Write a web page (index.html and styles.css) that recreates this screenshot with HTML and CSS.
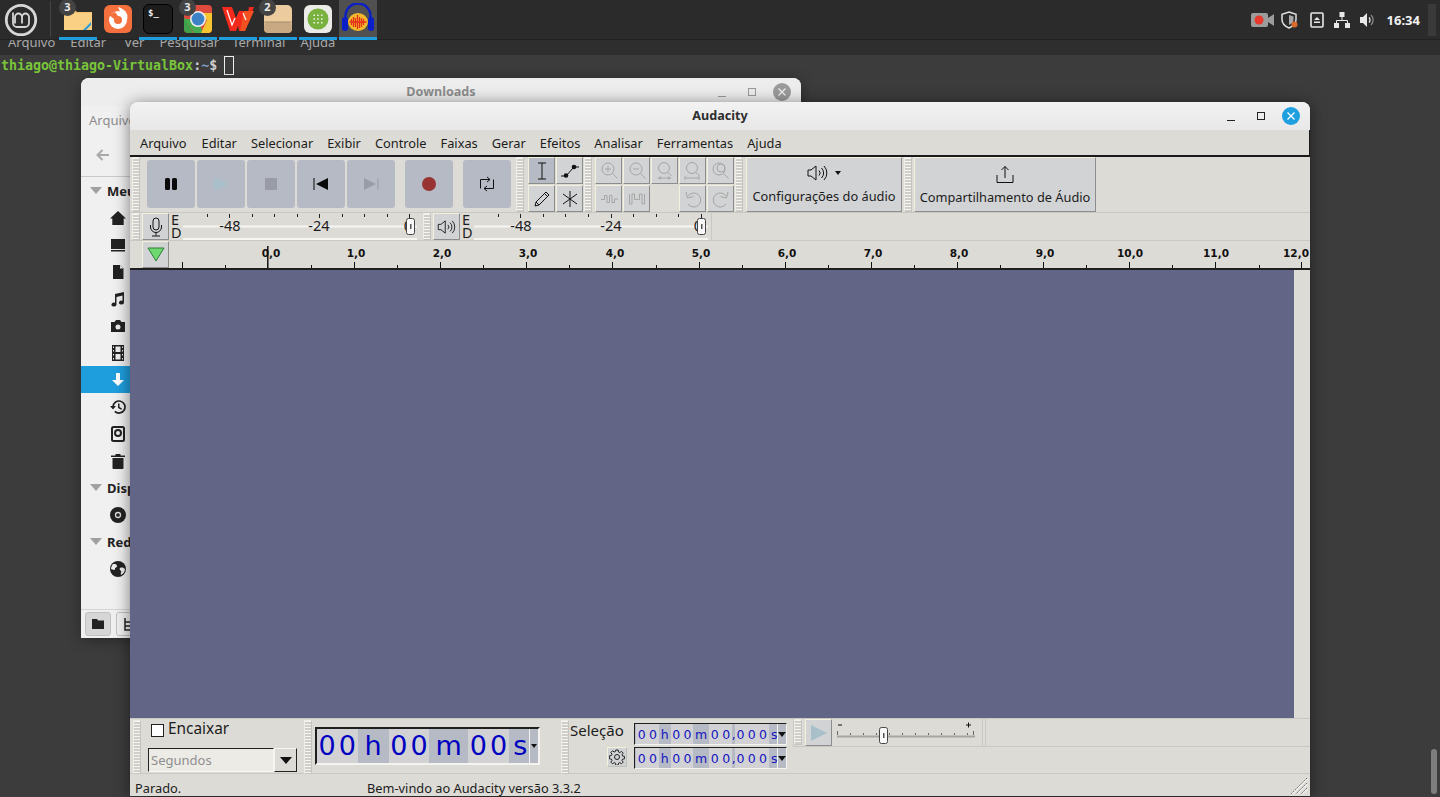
FILE: index.html
```html
<!DOCTYPE html>
<html lang="pt">
<head>
    <meta charset="UTF-8">
    <title>Audacity</title>
    <link rel="stylesheet" href="styles.css">
</head>
<body>
<div class="panel">
    <div class="menu-logo">
        <svg width="34" height="34" viewBox="0 0 34 34" fill="none" stroke="#d6d6d6">
            <circle cx="17" cy="17" r="14.7" stroke-width="2.8"/>
            <path d="M9 9.500v10.500a4 4 0 0 0 4 4h8a4 4 0 0 0 4-4v-6a3.500 3.500 0 0 0-7 0v6.500M18 14a3.500 3.500 0 0 0-7 0v6.500" stroke-width="1.800"/>
        </svg>
    </div>
    <div class="panel-sep"></div>
    <div class="dock">
        <div class="dock-item running">
            <svg width="30" height="26" viewBox="0 0 30 26">
                <path d="M1 3h10l3 3h15v18H1z" fill="#f6c46f"/>
                <path d="M1 7h28v17H1z" fill="#fad084"/>
                <path d="M20 24l8-8v3l-5 5z" fill="#2c9ad8"/>
            </svg>
            <span class="badge">3</span>
        </div>
        <div class="dock-item">
            <svg width="30" height="30" viewBox="0 0 30 30">
                <rect x="1" y="1" width="28" height="28" rx="6" fill="#f4703c"/>
                <circle cx="15" cy="16" r="9" fill="#fff"/>
                <path d="M15 3c4 1 7 3 9 7 .7 2 .5 4 0 6l-6-6z" fill="#fff"/>
                <path d="M6 11l6-3 3 4-4 3z" fill="#f4703c"/>
                <circle cx="15" cy="16" r="4" fill="#f4703c"/>
            </svg>
        </div>
        <div class="dock-item running">
            <div class="term-icon">$_</div>
        </div>
        <div class="dock-item running">
            <svg width="30" height="30" viewBox="0 0 30 30">
                <rect x="1" y="1" width="28" height="28" rx="4" fill="#de4b3e"/>
                <path d="M1 13L10 29H5a4 4 0 0 1-4-4z" fill="#3fa24a"/>
                <path d="M1 15l10 14h9l-5-14z" fill="#46ab50"/>
                <path d="M15 9h14v16a4 4 0 0 1-4 4h-7l6-13z" fill="#f7c52f"/>
                <circle cx="15" cy="15" r="8" fill="#eee"/>
                <circle cx="15" cy="15" r="6.400" fill="#3d82c6"/>
            </svg>
            <span class="badge badge-chrome">3</span>
        </div>
        <div class="dock-item running">
            <svg width="32" height="26" viewBox="0 0 32 26">
                <path d="M0 1h10l4 11 3-7h5l3 7 2-11h5L23 25h-6l-1-5-2 5H8z" fill="#f32a1c"/>
                <path d="M22 5h10l-9 20h-5z" fill="#f5501f"/>
                <path d="M5 4l5 15 3-7M21 7l3 7" fill="none" stroke="#fff" stroke-width="1.200"/>
            </svg>
        </div>
        <div class="dock-item running">
            <svg width="30" height="30" viewBox="0 0 30 30">
                <rect x="1" y="1" width="28" height="28" rx="5" fill="#eccb9e"/>
                <rect x="1" y="18" width="28" height="11" rx="4" fill="#c9a984"/>
                <path d="M1 18h28" stroke="#a98c6a"/>
            </svg>
            <span class="badge">2</span>
        </div>
        <div class="dock-item running">
            <svg width="30" height="30" viewBox="0 0 30 30">
                <rect x="1" y="1" width="28" height="28" rx="6" fill="#ebebe8"/>
                <circle cx="15" cy="15" r="10.500" fill="#79b13f"/>
                <path d="M10.500 10.500h1.500v1.500h-1.500zM14.200 10.500h1.500v1.500h-1.500zM18 10.500h1.500v1.500H18zM10.500 14.200h1.500v1.500h-1.500zM14.200 14.200h1.500v1.500h-1.500zM18 14.200h1.500v1.500H18zM10.500 18h1.500v1.500h-1.500zM14.200 18h1.500v1.500h-1.500zM18 18h1.500v1.500H18z" fill="#f4f7ee"/>
            </svg>
        </div>
        <div class="dock-item running active">
            <svg width="34" height="32" viewBox="0 0 34 32">
                <path d="M4.500 18v-5a12.500 12.500 0 0 1 25 0v5" fill="none" stroke="#0a1fc8" stroke-width="2.400"/>
                <rect x="1" y="14" width="6" height="14" rx="3" fill="#0a1fc8"/>
                <rect x="27" y="14" width="6" height="14" rx="3" fill="#0a1fc8"/>
                <ellipse cx="17" cy="19" rx="10" ry="9" fill="#f4b82a"/>
                <path d="M8.500 19h17M10.500 16v6M12.500 14v10M14.500 15v9M16.500 12v14M18.500 14v11M20.500 15v9M22.500 16v6" fill="none" stroke="#e2301c" stroke-width="1.300"/>
            </svg>
        </div>
    </div>
    <div class="tray">
        <svg class="t-cam" width="24" height="16" viewBox="0 0 24 16">
            <rect x="0" y="1" width="17" height="14" rx="2" fill="#9c9c9c"/>
            <path d="M17 6l6-4v12l-6-4z" fill="#9c9c9c"/>
            <circle cx="8" cy="8" r="4.500" fill="#e8392c"/>
        </svg>
        <svg class="t-shield" width="18" height="18" viewBox="0 0 18 18">
            <path d="M8 1l7 2.200v5.300c0 4-3 6.800-7 8.500-4-1.700-7-4.500-7-8.500V3.200z" fill="none" stroke="#e0e0e0" stroke-width="1.500"/>
            <path d="M8 4l4.500 1.500V9c0 2-2 4-4.500 5z" fill="#a8a8a8"/>
            <circle cx="13.500" cy="13.500" r="3" fill="#d96b2e"/>
        </svg>
        <svg class="t-box" width="14" height="16" viewBox="0 0 14 16">
            <rect x="1" y="1" width="12" height="14" rx="1" fill="none" stroke="#e8e8e8" stroke-width="1.600"/>
            <path d="M7 5l3 3H4zM4 9.500h6V11H4z" fill="#e8e8e8"/>
        </svg>
        <svg class="t-net" width="16" height="16" viewBox="0 0 16 16">
            <path d="M5.500 0h5v5h-5zM0 11h5v5H0zM11 11h5v5h-5z" fill="#e8e8e8"/>
            <path d="M8 5v3M2.500 11V8.500h11V11" fill="none" stroke="#e8e8e8"/>
        </svg>
        <svg class="t-vol" width="16" height="16" viewBox="0 0 16 16">
            <path d="M0 5h3l4-4v14l-4-4H0z" fill="#e8e8e8"/>
            <path d="M9 5.500a3.500 3.500 0 0 1 0 5" fill="none" stroke="#e8e8e8" stroke-width="1.300"/>
            <path d="M11 3a7 7 0 0 1 0 10" fill="none" stroke="#8c8c8c" stroke-width="1.300"/>
        </svg>
        <span class="clock">16:34</span>
        <div class="tray-end"></div>
    </div>
</div>

<div class="terminal">
    <div class="term-menu">
        <span>Arquivo</span><span>Editar</span><span class="tm-ver">Ver</span><span>Pesquisar</span><span class="tm-term">Terminal</span><span>Ajuda</span>
    </div>
    <div class="term-body">
        <span class="p-user">thiago@thiago-VirtualBox</span><span class="p-colon">:</span><span class="p-path">~</span><span class="p-colon">$ </span><span class="cursor"></span>
    </div>
    <div class="scroll-thumb"></div>
</div>

<div class="win files">
    <div class="files-title">
        <span>Downloads</span>
        <div class="files-ctrl">
            <i class="ctl-min grey"></i><i class="ctl-max grey"></i>
            <svg class="ctl-close" width="18" height="18" viewBox="0 0 18 18"><circle cx="9" cy="9" r="9" fill="#9b9b9b"/><path d="M5.500 5.500l7 7M12.500 5.500l-7 7" stroke="#eee" stroke-width="1.300"/></svg>
        </div>
    </div>
    <div class="files-menu">Arquivo</div>
    <div class="files-tool">
        <svg width="14" height="12" viewBox="0 0 14 12"><path d="M13 6H2M6.500 1L1.500 6l5 5" fill="none" stroke="#a9a9a9" stroke-width="2"/></svg>
    </div>
    <div class="side">
        <div class="side-head"><i class="tri"></i>Meu computador</div>
        <div class="side-row"><svg width="16" height="16" viewBox="0 0 16 16"><path d="M8 1L0 8.500h2.300V15h11.400V8.500H16z" fill="#222"/></svg></div>
        <div class="side-row"><svg width="16" height="16" viewBox="0 0 16 16"><path d="M1 2h14v10H1zM1 13h14v1.500H1z" fill="#222"/></svg></div>
        <div class="side-row"><svg width="16" height="16" viewBox="0 0 16 16"><path d="M3 1h7l3.500 3.500V15H3z" fill="#222"/><path d="M10 1v3.500h3.500" fill="#eee"/></svg></div>
        <div class="side-row"><svg width="16" height="16" viewBox="0 0 16 16"><path d="M5 3l9-2v10.500a2.500 2 0 1 1-1.500-1.800V4.500L6.500 6v7.500A2.500 2 0 1 1 5 11.700z" fill="#222"/></svg></div>
        <div class="side-row"><svg width="16" height="16" viewBox="0 0 16 16"><path d="M1 4h3.500L6 2h4l1.500 2H15v10H1z" fill="#222"/><circle cx="8" cy="9" r="2.500" fill="#eee"/></svg></div>
        <div class="side-row"><svg width="16" height="16" viewBox="0 0 16 16"><path d="M2 0h12v16H2z" fill="#222"/><path d="M3 1.500h1v1.500H3zM3 5h1v1.500H3zM3 9h1v1.500H3zM3 13h1v1.500H3zM12 1.500h1v1.500h-1zM12 5h1v1.500h-1zM12 9h1v1.500h-1zM12 13h1v1.500h-1zM5.500 1.500h5V7h-5zM5.500 9h5v5.500h-5z" fill="#eee"/></svg></div>
        <div class="side-row selected"><svg width="16" height="16" viewBox="0 0 16 16"><path d="M6 1h4v7h4l-6 6-6-6h4z" fill="#fff"/></svg></div>
        <div class="side-row"><svg width="16" height="16" viewBox="0 0 16 16"><path d="M3 8a6 6 0 1 1 1.800 4.300" fill="none" stroke="#222" stroke-width="1.700"/><path d="M0 7h6L3 10.500zM8 4.500h1.500V8l2.500 1.500-.8 1.200L8 9z" fill="#222"/></svg></div>
        <div class="side-row"><svg width="16" height="16" viewBox="0 0 16 16"><rect x="2" y="1" width="12" height="14" rx="1.500" fill="none" stroke="#222" stroke-width="2"/><circle cx="8" cy="7" r="3" fill="none" stroke="#222" stroke-width="2"/></svg></div>
        <div class="side-row"><svg width="16" height="16" viewBox="0 0 16 16"><path d="M1 2.500h14V4H1zM5.500 1h5v1.500h-5zM2.500 5h11v10a1 1 0 0 1-1 1h-9a1 1 0 0 1-1-1z" fill="#222"/></svg></div>
        <div class="side-head"><i class="tri"></i>Dispositivos</div>
        <div class="side-row"><svg width="16" height="16" viewBox="0 0 16 16"><circle cx="8" cy="8" r="8" fill="#222"/><circle cx="8" cy="8" r="2.500" fill="none" stroke="#ddd" stroke-width="1.300"/></svg></div>
        <div class="side-head"><i class="tri"></i>Rede</div>
        <div class="side-row"><svg width="16" height="16" viewBox="0 0 16 16"><circle cx="8" cy="8" r="8" fill="#222"/><path d="M3 3c2 0 4 0 4 2s-2 1-2 3-3 0-4 0c0-2 1-4 2-5zM10 7c2-1 4 0 5 1 0 3-2 5-4 6-1-2 1-3 0-4s-2-2-1-3z" fill="#eee"/></svg></div>
    </div>
    <div class="files-foot">
        <div class="foot-btn on"><svg width="12" height="10" viewBox="0 0 12 10"><path d="M0 0h5l1 1.500h6V10H0z" fill="#222"/></svg></div>
        <div class="foot-btn"><svg width="13" height="13" viewBox="0 0 13 13"><path d="M2 0v12h10M2 4h5M2 8h5" fill="none" stroke="#222" stroke-width="1.500"/></svg></div>
    </div>
</div>

<div class="win audacity">
    <div class="titlebar">
        <span>Audacity</span>
        <div class="title-ctrl">
            <i class="ctl-min"></i><i class="ctl-max"></i>
            <svg class="ctl-close" width="18" height="18" viewBox="0 0 18 18"><circle cx="9" cy="9" r="9" fill="#1e9fe0"/><path d="M5.500 5.500l7 7M12.500 5.500l-7 7" stroke="#fff" stroke-width="1.300"/></svg>
        </div>
    </div>
    <div class="menubar">
        <span class="menu-first">Arquivo</span><span>Editar</span><span>Selecionar</span><span>Exibir</span><span>Controle</span><span>Faixas</span><span>Gerar</span><span>Efeitos</span><span>Analisar</span><span>Ferramentas</span><span>Ajuda</span>
    </div>

    <div class="row row-tools">
        <div class="grip tall"></div>
        <div class="transport">
            <div class="tbtn"><svg width="14" height="14" viewBox="0 0 14 14"><rect x="1" y="1" width="5" height="12" rx="1.500" fill="#0a0a0a"/><rect x="8" y="1" width="5" height="12" rx="1.500" fill="#0a0a0a"/></svg></div>
            <div class="tbtn"><svg width="16" height="16" viewBox="0 0 16 16"><path d="M1 1l14 7-14 7z" fill="#a9bfca"/></svg></div>
            <div class="tbtn"><svg width="14" height="14" viewBox="0 0 14 14"><rect x="1" y="1" width="12" height="12" fill="#999ca6"/></svg></div>
            <div class="tbtn"><svg width="16" height="14" viewBox="0 0 16 14"><path d="M1 1v12" stroke="#0a0a0a"/><path d="M15 1v12L3 7z" fill="#0a0a0a"/></svg></div>
            <div class="tbtn"><svg width="16" height="14" viewBox="0 0 16 14"><path d="M15 1v12" stroke="#999ca6"/><path d="M1 1v12l12-6z" fill="#999ca6"/></svg></div>
            <div class="tbtn gap"><svg width="16" height="16" viewBox="0 0 16 16"><circle cx="8" cy="8" r="7" fill="#993333"/></svg></div>
            <div class="tbtn gap"><svg width="16" height="16" viewBox="0 0 16 16" fill="none" stroke="#111"><path d="M1.500 12.500v-9H11M8 1l3 2.500L8 6M14.500 3.500v9H5M8 10l-3 2.500L8 15"/></svg></div>
        </div>
        <div class="grip tall g-tr"></div>
        <div class="tool-grid tools-2">
            <div class="sbtn on"><svg width="12" height="18" viewBox="0 0 12 18"><path d="M2 1h8M2 17h8M6 1v16" fill="none" stroke="#111"/></svg></div>
            <div class="sbtn"><svg width="20" height="16" viewBox="0 0 20 16"><path d="M1 13h5l8-9h5" fill="none" stroke="#111"/><circle cx="6" cy="12.500" r="2.300" fill="#111"/><circle cx="14" cy="4" r="2.300" fill="#111"/></svg></div>
            <div class="sbtn"><svg width="18" height="18" viewBox="0 0 18 18"><path d="M2 16l1-4L13 2l3 3L6 15zM3 12l3 3M11.500 3.500l3 3" fill="none" stroke="#111"/></svg></div>
            <div class="sbtn"><svg width="16" height="16" viewBox="0 0 16 16"><path d="M8 0v16M1 3l14 10M15 3L1 13" fill="none" stroke="#111"/></svg></div>
        </div>
        <div class="grip tall g-s"></div>
        <div class="tool-grid tools-5">
            <div class="sbtn"><svg width="20" height="20" viewBox="0 0 20 20" fill="none" stroke="#a6a6a4"><circle cx="9" cy="8" r="6"/><path d="M13.500 12.500l5 5M6 8h6M9 5v6"/></svg></div>
            <div class="sbtn"><svg width="20" height="20" viewBox="0 0 20 20" fill="none" stroke="#a6a6a4"><circle cx="9" cy="8" r="6"/><path d="M13.500 12.500l5 5M6 8h6"/></svg></div>
            <div class="sbtn"><svg width="20" height="20" viewBox="0 0 20 20" fill="none" stroke="#a6a6a4"><circle cx="9" cy="7" r="5.500"/><path d="M12.500 11l4 4M3 17h13M6 15.500l-2 1.500 2 1.500M13 15.500l2 1.500-2 1.500"/></svg></div>
            <div class="sbtn"><svg width="20" height="20" viewBox="0 0 20 20" fill="none" stroke="#a6a6a4"><circle cx="9" cy="7" r="5.500"/><path d="M12.500 11l4 4M2 17h14M2 15v4M16 15v4"/></svg></div>
            <div class="sbtn"><svg width="20" height="20" viewBox="0 0 20 20" fill="none" stroke="#a6a6a4"><circle cx="8" cy="8" r="6"/><circle cx="10" cy="7" r="4"/><path d="M12.500 12.500l5 5"/></svg></div>
            <div class="sbtn"><svg width="18" height="14" viewBox="0 0 18 14" fill="none" stroke="#a6a6a4"><path d="M1 7.500h3.500v-4H7v7h2.500v-7H12v7h2.500v-3.500H18"/></svg></div>
            <div class="sbtn"><svg width="18" height="14" viewBox="0 0 18 14" fill="none" stroke="#a6a6a4"><path d="M1.500 2v10H4V2h2.500v5.500h5V2H14v10h2.500V2"/></svg></div>
            <div class="sbtn blank"></div>
            <div class="sbtn"><svg width="20" height="18" viewBox="0 0 20 18" fill="none" stroke="#a6a6a4"><path d="M5 6a7 7 0 1 1 0 8M3 2l1.500 6 6-1.500"/></svg></div>
            <div class="sbtn"><svg width="20" height="18" viewBox="0 0 20 18" fill="none" stroke="#a6a6a4"><path d="M15 6a7 7 0 1 0 0 8M17 2l-1.500 6-6-1.500"/></svg></div>
        </div>
        <div class="grip tall g-s"></div>
        <div class="big-btn audio">
            <div class="big-icon">
                <svg width="22" height="16" viewBox="0 0 22 16" fill="none" stroke="#111"><path d="M1 5h3l5-4v14l-5-4H1zM12 5.500a3.500 3.500 0 0 1 0 5M14.500 3a7 7 0 0 1 0 10M17 1a10 10 0 0 1 0 14"/></svg>
                <i class="caret"></i>
            </div>
            <span>Configurações do áudio</span>
        </div>
        <div class="grip tall g-n"></div>
        <div class="big-btn share">
            <div class="big-icon">
                <svg width="18" height="19" viewBox="0 0 18 19" fill="none" stroke="#111"><path d="M1 10v7.500h16V10M9 13V1.500M5.500 5L9 1.500 12.500 5"/></svg>
            </div>
            <span>Compartilhamento de Áudio</span>
        </div>
    </div>

    <div class="row row-meter">
        <div class="grip short"></div>
        <div class="sbtn mic"><svg width="14" height="20" viewBox="0 0 14 20" fill="none" stroke="#111"><rect x="4" y="1" width="6" height="12" rx="3"/><path d="M1.500 8v2a5.500 5.500 0 0 0 11 0V8M7 15.500v3M3 19h8"/></svg></div>
        <div class="ed"><span>E</span><span>D</span></div>
        <svg class="meter" width="234" height="27" viewBox="183 213 234 27">
            <path d="M183 226.500h234M183 239h234" stroke="#f7f6f3" stroke-width="2"/>
            <path d="M207.500 214v3M229.500 214v4M252.500 214v3M274.500 214v3M297.500 214v3M319.500 214v4M342.500 214v3M364.500 214v3M387.500 214v3M409.500 214v4" stroke="#222"/>
            <text x="230" y="231" text-anchor="middle">-48</text>
            <text x="319" y="231" text-anchor="middle">-24</text>
            <text x="408" y="231" text-anchor="middle">0</text>
            <rect x="406.500" y="218.500" width="8" height="16" rx="2" fill="#f8f8f8" stroke="#444"/>
            <rect x="410" y="224" width="1.500" height="5" fill="#555"/>
        </svg>
        <div class="grip short g-m"></div>
        <div class="sbtn spk"><svg width="20" height="14" viewBox="0 0 22 16" fill="none" stroke="#111"><path d="M1 5h3l5-4v14l-5-4H1zM12 5.500a3.500 3.500 0 0 1 0 5M14.500 3a7 7 0 0 1 0 10M17 1a10 10 0 0 1 0 14"/></svg></div>
        <div class="ed"><span>E</span><span>D</span></div>
        <svg class="meter" width="234" height="27" viewBox="474 213 234 27">
            <path d="M474 226.500h234M474 239h234" stroke="#f7f6f3" stroke-width="2"/>
            <path d="M498.500 214v3M520.500 214v4M543.500 214v3M565.500 214v3M588.500 214v3M611.500 214v4M633.500 214v3M656.500 214v3M678.500 214v3M701.500 214v4" stroke="#222"/>
            <text x="521" y="231" text-anchor="middle">-48</text>
            <text x="611" y="231" text-anchor="middle">-24</text>
            <text x="698" y="231" text-anchor="middle">0</text>
            <rect x="697.500" y="218.500" width="8" height="16" rx="2" fill="#f8f8f8" stroke="#444"/>
            <rect x="701" y="224" width="1.500" height="5" fill="#555"/>
        </svg>
        <div class="meter-end"></div>
    </div>

    <div class="row row-ruler">
        <div class="ruler-side"></div>
        <div class="sbtn play-head"><svg width="18" height="15" viewBox="0 0 18 15"><path d="M1 1h16L9 14z" fill="#6fd96f" stroke="#2f7d3a"/></svg></div>
        <svg class="ruler" width="1140" height="29" viewBox="170 241 1140 29">
            <path d="M182.500 262v6M225.500 265v3M311.500 265v3M354.500 262v6M397.500 265v3M440.500 262v6M483.500 265v3M526.500 262v6M569.500 265v3M612.500 262v6M656.500 265v3M699.500 262v6M742.500 265v3M785.500 262v6M828.500 265v3M871.500 262v6M914.500 265v3M957.500 262v6M1000.500 265v3M1043.500 262v6M1086.500 265v3M1129.500 262v6M1172.500 265v3M1215.500 262v6M1259.500 265v3M1301.500 262v6" stroke="#111"/>
            <path d="M267.800 246v22" stroke="#111" stroke-width="1.500"/>
            <text x="271" y="257">0,0</text>
            <text x="356" y="257">1,0</text>
            <text x="442" y="257">2,0</text>
            <text x="528" y="257">3,0</text>
            <text x="615" y="257">4,0</text>
            <text x="701" y="257">5,0</text>
            <text x="787" y="257">6,0</text>
            <text x="873" y="257">7,0</text>
            <text x="959" y="257">8,0</text>
            <text x="1045" y="257">9,0</text>
            <text x="1130" y="257">10,0</text>
            <text x="1216" y="257">11,0</text>
            <text x="1296" y="257">12,0</text>
        </svg>
    </div>

    <div class="tracks">
        <div class="track-area"></div>
        <div class="v-scroll"></div>
    </div>

    <div class="bottom">
        <div class="grip low"></div>
        <div class="snap">
            <label class="snap-check"><i class="check"></i><span class="snap-text">Encaixar</span></label>
            <div class="combo">
                <span class="combo-text">Segundos</span>
                <span class="combo-btn"><i class="caret big"></i></span>
            </div>
        </div>
        <div class="grip low g-c"></div>
        <div class="clock-big">
            <b class="d">0</b><b class="d">0</b><b class="u">h</b><b class="d">0</b><b class="d">0</b><b class="u m">m</b><b class="d">0</b><b class="d">0</b><b class="u s">s</b>
            <span class="clock-drop"><i class="caret"></i></span>
        </div>
        <div class="grip low g-sel"></div>
        <div class="selection">
            <div class="sel-left">
                <span class="sel-label">Seleção</span>
                <div class="gear"><svg width="16" height="16" viewBox="0 0 16 16" fill="none" stroke="#222"><circle cx="8" cy="8" r="2.500"/><path d="M6.800 1h2.400l.3 2 1.300.6 1.700-1.200 1.700 1.700-1.200 1.700.6 1.300 2 .3v2.400l-2 .3-.6 1.300 1.200 1.700-1.700 1.700-1.700-1.200-1.300.6-.3 2H6.800l-.3-2-1.300-.6-1.700 1.200-1.700-1.700 1.200-1.700-.6-1.300-2-.3V6.800l2-.3.6-1.300-1.200-1.700 1.700-1.700 1.700 1.200 1.300-.6z"/></svg></div>
            </div>
            <div class="sel-clocks">
                <div class="clock-small">
                    <b class="d">0</b><b class="d">0</b><b class="u">h</b><b class="d">0</b><b class="d">0</b><b class="u um">m</b><b class="d">0</b><b class="d">0</b><b class="u uc">,</b><b class="d">0</b><b class="d">0</b><b class="d">0</b><b class="u us">s</b>
                    <span class="clock-drop"><i class="caret wide"></i></span>
                </div>
                <div class="clock-small">
                    <b class="d">0</b><b class="d">0</b><b class="u">h</b><b class="d">0</b><b class="d">0</b><b class="u um">m</b><b class="d">0</b><b class="d">0</b><b class="u uc">,</b><b class="d">0</b><b class="d">0</b><b class="d">0</b><b class="u us">s</b>
                    <span class="clock-drop"><i class="caret wide"></i></span>
                </div>
            </div>
        </div>
        <div class="speed">
            <div class="speed-top">
                <div class="grip mini"></div>
                <div class="sbtn speed-play"><svg width="18" height="18" viewBox="0 0 18 18"><path d="M1 1l16 8-16 8z" fill="#a9bfca"/></svg></div>
                <svg class="speed-slider" width="140" height="26" viewBox="836 719 140 26">
                    <path d="M838 725h4" stroke="#111"/>
                    <path d="M966 725h5M968.500 722.500v5" stroke="#111"/>
                    <path d="M837.500 731v4M850.500 733v2M863.500 733v2M876.500 733v2M889.500 733v2M902.500 733v2M915.500 733v2M928.500 733v2M941.500 733v2M954.500 733v2M967.500 733v2M973.500 731v4" stroke="#666"/>
                    <path d="M837 736.500h138" stroke="#a5a5a3" stroke-width="2"/>
                    <rect x="879.500" y="727.500" width="8" height="16" rx="2" fill="#f8f8f8" stroke="#444"/>
                    <rect x="883" y="733" width="1.500" height="5" fill="#555"/>
                </svg>
                <div class="speed-end"></div>
            </div>
        </div>
    </div>

    <div class="status">
        <span class="st-left">Parado.</span>
        <span class="st-main">Bem-vindo ao Audacity versão 3.3.2</span>
        <svg class="resize" width="18" height="18" viewBox="0 0 18 18"><path d="M17 1L1 17M17 6L6 17M17 11L11 17" stroke="#777" stroke-width="1" stroke-dasharray="2 1"/><path d="M17.500 2L2 17.500M17.500 7L7 17.500M17.500 12L12 17.500" stroke="#fff"/></svg>
    </div>
</div>
</body>
</html>
```

FILE: styles.css
```css
* { box-sizing: border-box; }
html, body { margin: 0; padding: 0; }
body { width: 1440px; height: 797px; overflow: hidden; position: relative; background: #3c3c3c; font-family: "Noto Sans", sans-serif; color: #1c1c1c; }
svg { display: block; flex: none; }
i { display: block; font-style: normal; }

/* top panel */
.panel { height: 40px; background: #2b2b2b; display: flex; align-items: flex-start; position: relative; z-index: 5; border-bottom: 1px solid #222; }
.menu-logo { width: 42px; height: 40px; margin-right: 2px; display: flex; align-items: center; justify-content: center; }
.panel-sep { width: 1px; height: 36px; margin: 1px 0 0 6px; background: #444; }
.dock { display: flex; margin-left: 8px; gap: 2px; }
.dock-item { width: 38px; height: 40px; position: relative; display: flex; align-items: center; justify-content: center; padding-bottom: 3px; }
.dock-item.running { border-bottom: 3px solid #1f9ede; padding-bottom: 0; }
.dock-item.active { background: #505050; }
.badge { position: absolute; left: 0; top: -1px; width: 17px; height: 17px; border-radius: 50%; background: #444; color: #e8e8e8; font: bold 11px/15px "Noto Sans", sans-serif; text-align: center; }
.term-icon { width: 30px; height: 30px; border-radius: 6px; background: #1c1c1c; border: 1px solid #000; color: #eee; font: bold 9px/12px "DejaVu Sans Mono", monospace; padding: 2px 4px; }
.tray { margin-left: auto; height: 40px; display: flex; align-items: center; }
.t-shield { margin-left: 6px; }
.t-box { margin-left: 11px; }
.t-net { margin-left: 10px; }
.t-vol { margin-left: 10px; }
.clock { font: bold 13px "Noto Sans", sans-serif; color: #f2f2f2; margin: 0 8px 0 11px; }
.tray-end { width: 8px; height: 32px; background: #3a3a3a; margin-right: 4px; }

/* terminal behind everything */
.terminal { height: 757px; }
.term-menu { height: 15px; background: #2e2e2e; display: flex; align-items: flex-end; overflow: hidden; padding-left: 8px; font-size: 13px; line-height: 13px; color: #a9a9a9; gap: 15px; }
.term-menu span { margin-bottom: 6px; }
.term-menu .tm-ver { margin-left: 3px; }
.term-menu .tm-term { margin-left: -2px; }
.term-body { padding: 1px 0 0 1px; font: bold 13.3px/19px "DejaVu Sans Mono", monospace; color: #ccc; display: flex; white-space: pre; }
.p-user { color: #79c63a; }
.p-colon { color: #d0d0d0; }
.p-path { color: #7f9fc0; }
.cursor { width: 10px; height: 19px; margin-left: -1px; border: 1px solid #eee; }
.scroll-thumb { position: absolute; left: 1431px; top: 749px; width: 6px; height: 45px; border-radius: 3px; background: #7e7e7e; }

/* windows on the desktop */
.win { position: absolute; border-radius: 8px 8px 0 0; display: flex; flex-direction: column; }

.files { left: 81px; top: 78px; width: 720px; height: 560px; background: #f0f0f0; box-shadow: 0 2px 14px rgba(0,0,0,.35); color: #333; overflow: hidden; }
.files-title { height: 28px; flex: none; position: relative; text-align: center; font-weight: bold; font-size: 12.6px; line-height: 28px; color: #8c8c8c; background: #ededed; }
.files-ctrl { position: absolute; right: 10px; top: 5px; display: flex; align-items: center; }
.files-menu { height: 28px; flex: none; padding-left: 8px; font-size: 13px; line-height: 28px; color: #8d8d8d; }
.files-tool { height: 43px; flex: none; border-bottom: 1px solid #c9c9c9; padding: 15px 0 0 15px; }
.side { flex: 1; font-weight: bold; font-size: 13px; }
.side-head { height: 27px; display: flex; align-items: center; padding-left: 9px; color: #222; white-space: nowrap; }
.tri { width: 0; height: 0; border: 6px solid transparent; border-top: 7px solid #a0a0a0; border-bottom: 0; margin-right: 5px; }
.side-row { height: 27px; padding-left: 29px; display: flex; align-items: center; }
.side-row.selected { background: #1f9ede; }
.files-foot { height: 29px; flex: none; border-top: 1px solid #d5d5d5; padding: 2px 0 0 4px; display: flex; gap: 5px; }
.foot-btn { width: 26px; height: 24px; border: 1px solid #c2c2c2; border-radius: 3px; display: flex; align-items: center; justify-content: center; }
.foot-btn.on { background: #d6d6d6; }

.ctl-min { width: 8px; height: 1px; background: #222; margin-top: 8px; }
.ctl-max { width: 8px; height: 8px; border: 1px solid #222; }
.ctl-min.grey, .ctl-max.grey { border-color: #9a9a9a; }
.ctl-min.grey { background: #9a9a9a; }
.files-ctrl .ctl-max, .title-ctrl .ctl-max { margin: 0 17px 0 22px; }

.audacity { left: 130px; top: 102px; width: 1180px; height: 694px; background: #dcdbd6; box-shadow: 0 2px 16px rgba(0,0,0,.5); font-size: 12.8px; }
.titlebar { height: 28px; flex: none; position: relative; border-radius: 8px 8px 0 0; background: linear-gradient(#f2f2f2, #e8e8e8); text-align: center; font-weight: bold; font-size: 12.6px; line-height: 28px; color: #2e2e2e; }
.title-ctrl { position: absolute; right: 10px; top: 5px; display: flex; align-items: center; }
.menubar { height: 27px; flex: none; border-bottom: 2px solid #1a1a1a; border-right: 1px solid #1a1a1a; display: flex; gap: 14px; padding: 3px 0 0 10px; line-height: 20px; }
.menu-first { margin-right: 1px; }

.row { display: flex; flex: none; align-items: flex-start; }
.row-tools { height: 56px; border-bottom: 1px solid #c9c8c4; padding-left: 2px; }
.grip { width: 8px; flex: none; border: 1px solid #eeede8; border-right-color: #c5c4bf; border-bottom-color: #c5c4bf; background: repeating-linear-gradient(#f6f5f1 0 1px, #cfcec9 1px 3px) center / 6px 100% no-repeat #dcdbd6; }
.grip.tall { height: 55px; }
.grip.short { height: 27px; }
.grip.low { height: 54px; margin-top: 1px; }
.grip.mini { height: 26px; }
.g-tr { margin-left: 5px; }
.g-s { margin-left: 1px; }
.g-n { margin-left: 2px; }
.g-m { margin-left: 6px; }
.transport { display: flex; gap: 2px; margin: 3px 0 0 7px; }
.tbtn { width: 48px; height: 48px; background: #b5bac5; border-radius: 3px; display: flex; align-items: center; justify-content: center; }
.tbtn.gap { margin-left: 8px; }
.tool-grid { display: grid; grid-template-columns: repeat(2, 27px); grid-auto-rows: 27px; gap: 1px; }
.tools-2 { margin-left: 4px; }
.tools-5 { grid-template-columns: repeat(5, 27px); margin-left: 3px; }
.sbtn { width: 27px; height: 27px; flex: none; background: #d2d3d5; border: 1px solid; border-color: #f3f1dc #8d8d8d #8d8d8d #f3f1dc; display: flex; align-items: center; justify-content: center; }
.sbtn.on { background: #b5bac5; }
.sbtn.blank { background: transparent; border: 0; }
.big-btn { height: 55px; flex: none; background: #d2d3d5; border: 1px solid; border-color: #f3f1dc #8d8d8d #8d8d8d #f3f1dc; display: flex; flex-direction: column; align-items: center; line-height: 18px; white-space: nowrap; }
.audio { width: 156px; margin-left: 3px; padding-top: 3px; }
.audio .big-icon { margin-bottom: 3px; }
.share { width: 182px; margin-left: 2px; padding-top: 5px; }
.share .big-icon { margin-bottom: 2px; }
.big-icon { height: 23px; display: flex; align-items: center; gap: 6px; }
.caret { width: 0; height: 0; border: 3.5px solid transparent; border-top: 4px solid #111; border-bottom: 0; }
.caret.big { border-width: 6px; border-top-width: 7px; border-bottom-width: 0; }
.caret.wide { border-width: 4px; border-top-width: 5px; border-bottom-width: 0; }

.row-meter { height: 28px; padding-left: 2px; border-bottom: 1px solid #c9c8c4; }
.mic { margin-left: 2px; }
.spk { margin-left: 2px; }
.ed { width: 12px; height: 27px; margin-left: 2px; font-size: 14.5px; line-height: 13px; display: flex; flex-direction: column; flex: none; overflow: hidden; }
.meter text { font: 14.5px "Noto Sans", sans-serif; fill: #1c1c1c; }
.meter-end { width: 1px; height: 27px; background: #c9c8c4; margin-left: 3px; }

.row-ruler { height: 29px; position: relative; }
.ruler-side { width: 12px; height: 27px; }
.play-head { width: 27px; height: 27px; }
.ruler { margin-left: 1px; }
.ruler text { font: bold 10.500px "DejaVu Sans", sans-serif; fill: #111; text-anchor: middle; }
.row-ruler::after { content: ""; position: absolute; left: 0; right: 0; top: 27px; height: 2px; background: #1f1f1f; }

.tracks { height: 448px; flex: none; display: flex; }
.track-area { flex: 1; background: #636586; }
.v-scroll { width: 16px; }

.bottom { height: 56px; flex: none; border-top: 1px solid #c9c8c4; border-bottom: 1px solid #c9c8c4; display: flex; align-items: flex-start; padding-left: 3px; }
.snap { width: 149px; margin-left: 7px; flex: none; padding-top: 4px; }
.snap-check { display: flex; align-items: center; font-size: 15.4px; line-height: 14px; height: 14px; padding-left: 3px; gap: 4px; }
.snap-text { margin-top: -2px; }
.check { width: 13px; height: 13px; background: #fff; border: 1px solid #222; }
.combo { display: flex; height: 24px; margin-top: 11px; }
.combo-text { width: 126px; background: #ecebe6; border: 1px solid; border-color: #222 #f6f6f3 #f6f6f3 #222; color: #8f8f8f; font-size: 13px; line-height: 22px; padding-left: 2px; }
.combo-btn { width: 23px; background: #dcdbd6; border: 1px solid; border-color: #f6f6f3 #222 #222 #f6f6f3; display: flex; align-items: center; justify-content: center; }
.g-c { margin-left: 7px; }
.clock-big { position: relative; margin: 8px 0 0 3px; width: 225px; height: 38px; flex: none; display: flex; border: 2px solid #1f1f1f; border-right: 2px solid #f4f3ef; border-bottom-color: #f4f3ef; background: #b5bac5; color: #0000c0; font-size: 27px; line-height: 34px; font-family: "DejaVu Sans", sans-serif; }
.clock-big b, .clock-small b { font-weight: normal; text-align: center; display: block; }
.clock-big .d { width: 20.3px; background: #d2d2d5; }
.clock-big .u { width: 31px; }
.clock-big .u.m { width: 39px; }
.clock-big .u.s { width: 23px; }
.clock-drop { position: absolute; right: 0; top: 0; bottom: 0; width: 9px; background: #b5bac5; border-left: 1px solid #f4f3ef; display: flex; align-items: center; justify-content: center; }
.g-sel { margin-left: 21px; }
.selection { display: flex; margin-left: 1px; flex: none; }
.sel-left { width: 64px; display: flex; flex-direction: column; align-items: flex-end; }
.sel-label { font-size: 15px; line-height: 20px; margin-top: 1px; width: 64px; white-space: nowrap; }
.gear { width: 20px; height: 20px; margin: 7px 7px 0 0; background: #d2d3d5; border: 1px solid; border-color: #f3f1dc #bdbdbb #bdbdbb #f3f1dc; display: flex; align-items: center; justify-content: center; }
.sel-clocks { display: flex; flex-direction: column; gap: 2px; padding-top: 4px; }
.clock-small { position: relative; width: 153px; height: 22px; display: flex; border: 1px solid #1f1f1f; border-right-color: #f4f3ef; border-bottom-color: #f4f3ef; background: #b5bac5; color: #1414c0; font: 12.5px/22px "DejaVu Sans", sans-serif; padding-left: 1px; }
.clock-small .d { width: 11.300px; background: #d2d2d5; }
.clock-small .u { width: 12px; }
.clock-small .u.um { width: 16px; }
.clock-small .u.uc { width: 3px; }
.clock-small .u.us { width: 11px; }
.speed { flex: 1; margin-left: 6px; border-left: 1px solid #c9c8c4; }
.speed-top { display: flex; align-items: flex-start; height: 28px; border-bottom: 1px solid #c9c8c4; }
.speed-play { margin-left: 3px; }
.speed-slider { margin-left: 4px; }
.speed-end { width: 4px; height: 27px; margin-left: 6px; border: 1px solid #c9c8c4; border-width: 0 1px; }

.status { height: 22px; flex: none; display: flex; position: relative; line-height: 28px; font-size: 12.8px; padding-left: 5px; }
.st-left { width: 232px; }
.resize { position: absolute; right: 2px; bottom: 1px; }
```
